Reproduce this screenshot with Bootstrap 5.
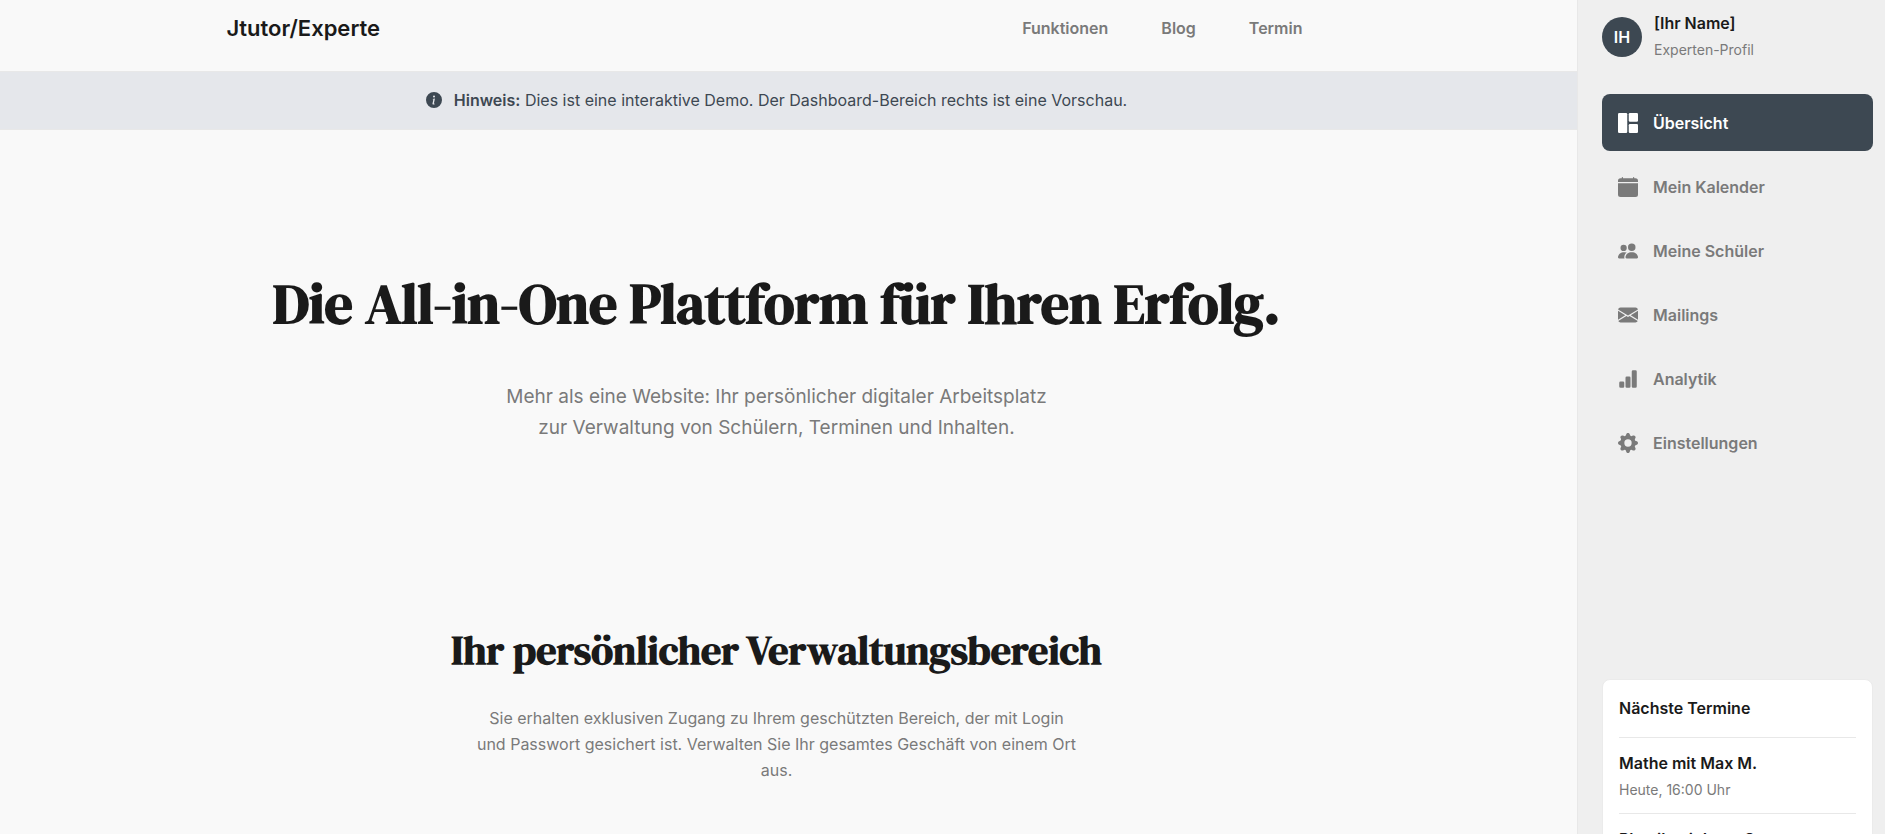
<!DOCTYPE html>
<html lang="de">
<head>
<meta charset="utf-8">
<meta name="viewport" content="width=device-width, initial-scale=1">
<title>Jtutor/Experte</title>
<link href="https://cdn.jsdelivr.net/npm/bootstrap@5.3.0/dist/css/bootstrap.min.css" rel="stylesheet">
<style>
:root { --ink: #1a1a1a; --muted: #7a7a7a; --slate: #3d4852; --line: #e8e8e8; }
body { font-family: Inter, "Liberation Sans", sans-serif; font-size: 16px; line-height: 26px; color: var(--ink); background: #f9f9f9; }
a { text-decoration: none; }
.page-main { min-width: 0; height: 100vh; overflow: hidden; }
.page-inner { max-width: 1100px; }
.gutter-end { padding-right: 24px; }
.topbar { height: 71px; padding-bottom: 16px; }
.brand { font-size: 22px; font-weight: 600; color: var(--ink); }
.topnav { gap: 53px; padding-right: 24px; }
.topnav a { font-weight: 600; color: var(--muted); }
.notice { background: #e5e7eb; color: var(--slate); border-top: 1px solid var(--line); border-bottom: 1px solid var(--line); padding-top: 15px; padding-bottom: 16px; }
.notice strong { font-weight: 600; }
h1, h2 { font-family: "DM Serif Display", "Liberation Serif", serif; font-weight: 700; color: var(--ink); margin: 0; }
h1 { font-size: 56px; line-height: 66px; }
h2 { font-size: 40px; line-height: 52px; }
.hero { padding-top: 141px; }
.hero p { font-size: 19px; line-height: 31px; color: var(--muted); max-width: 560px; margin: 44px auto 0; }
.intro { padding-top: 181px; }
.intro p { color: var(--muted); max-width: 600px; margin: 29px auto 0; }
.sidebar { width: 308px; height: 100vh; overflow: hidden; background: #efefef; border-left: 1px solid var(--line); padding: 10px 12px 0 24px; }
.avatar { width: 40px; height: 40px; background: var(--slate); color: #fff; font-weight: 600; }
.semi { font-weight: 600; }
.fine { font-size: 14px; line-height: 28px; color: var(--muted); }
.side-nav { gap: 7px; margin: 30px 0 208px; }
.side-nav a { height: 57px; padding: 0 16px; gap: 15px; border-radius: 8px; font-weight: 600; color: var(--muted); }
.side-nav a.active { background: var(--slate); color: #fff; }
.dates { background: #fff; border: 1px solid #ebebeb; border-radius: 8px; padding: 15px 16px; }
.dates li { border-top: 1px solid var(--line); padding: 12px 0 9px; }
</style>
</head>
<body>
<div class="d-flex">
  <div class="page-main flex-grow-1">
    <header class="gutter-end">
      <div class="topbar page-inner mx-auto d-flex align-items-center justify-content-between">
        <a class="brand" href="#">Jtutor/Experte</a>
        <nav class="topnav d-flex"><a href="#funktionen">Funktionen</a><a href="#blog">Blog</a><a href="#termin">Termin</a></nav>
      </div>
    </header>
    <div class="notice gutter-end d-flex align-items-center justify-content-center">
      <svg class="me-2" width="20" height="16" viewBox="0 0 20 16" fill="currentColor" aria-hidden="true"><path d="M8 16A8 8 0 1 0 8 0a8 8 0 0 0 0 16m.93-9.412-1 4.705c-.07.34.029.533.304.533.194 0 .487-.07.686-.246l-.088.416c-.287.346-.92.598-1.465.598-.703 0-1.002-.422-.808-1.319l.738-3.468c.064-.293.006-.399-.287-.47l-.451-.081.082-.381zM8 5.5a1 1 0 1 1 0-2 1 1 0 0 1 0 2"/></svg>
      <span><strong>Hinweis:</strong> Dies ist eine interaktive Demo. Der Dashboard-Bereich rechts ist eine Vorschau.</span>
    </div>
    <main class="gutter-end text-center">
      <section class="hero page-inner mx-auto">
        <h1>Die All-in-One Plattform für Ihren Erfolg.</h1>
        <p>Mehr als eine Website: Ihr persönlicher digitaler Arbeitsplatz zur Verwaltung von Schülern, Terminen und Inhalten.</p>
      </section>
      <section class="intro page-inner mx-auto" id="funktionen">
        <h2>Ihr persönlicher Verwaltungsbereich</h2>
        <p>Sie erhalten exklusiven Zugang zu Ihrem geschützten Bereich, der mit Login und Passwort gesichert ist. Verwalten Sie Ihr gesamtes Geschäft von einem Ort aus.</p>
      </section>
    </main>
  </div>
  <aside class="sidebar flex-shrink-0">
    <div class="d-flex align-items-center">
      <div class="avatar rounded-circle d-flex align-items-center justify-content-center flex-shrink-0">IH</div>
      <div class="ms-2 ps-1"><div class="semi">[Ihr Name]</div><div class="fine">Experten-Profil</div></div>
    </div>
    <nav class="side-nav d-flex flex-column">
      <a class="active d-flex align-items-center" href="#" aria-current="page"><svg width="20" height="20" viewBox="0 0 16 16" fill="currentColor"><rect width="7.4" height="16" rx="1"/><rect x="8.6" width="7.4" height="7" rx="1"/><rect x="8.6" y="8.8" width="7.4" height="7.2" rx="1"/></svg>Übersicht</a>
      <a class="d-flex align-items-center" href="#"><svg width="20" height="20" viewBox="0 0 16 16" fill="currentColor"><path d="M4 .5a.5.5 0 0 0-1 0V1H2a2 2 0 0 0-2 2v1h16V3a2 2 0 0 0-2-2h-1V.5a.5.5 0 0 0-1 0V1H4zM16 14V5H0v9a2 2 0 0 0 2 2h12a2 2 0 0 0 2-2"/></svg>Mein Kalender</a>
      <a class="d-flex align-items-center" href="#"><svg width="20" height="20" viewBox="0 0 16 16" fill="currentColor"><path d="M7 14s-1 0-1-1 1-4 5-4 5 3 5 4-1 1-1 1zm4-6a3 3 0 1 0 0-6 3 3 0 0 0 0 6m-5.784 6A2.24 2.24 0 0 1 5 13c0-1.355.68-2.75 1.936-3.72A6.3 6.3 0 0 0 5 9c-4 0-5 3-5 4s1 1 1 1zM4.500 8a2.500 2.500 0 1 0 0-5 2.500 2.500 0 0 0 0 5"/></svg>Meine Schüler</a>
      <a class="d-flex align-items-center" href="#"><svg width="20" height="20" viewBox="0 0 16 16" fill="currentColor"><path d="M.05 3.555A2 2 0 0 1 2 2h12a2 2 0 0 1 1.950 1.555L8 8.414zM0 4.697v7.104l5.803-3.558zM6.761 8.830l-6.570 4.027A2 2 0 0 0 2 14h12a2 2 0 0 0 1.808-1.144l-6.570-4.027L8 9.586zm3.436-.586L16 11.801V4.697z"/></svg>Mailings</a>
      <a class="d-flex align-items-center" href="#"><svg width="20" height="20" viewBox="0 0 16 16" fill="currentColor"><path d="M1 11a1 1 0 0 1 1-1h2a1 1 0 0 1 1 1v3a1 1 0 0 1-1 1H2a1 1 0 0 1-1-1zm5-4a1 1 0 0 1 1-1h2a1 1 0 0 1 1 1v7a1 1 0 0 1-1 1H7a1 1 0 0 1-1-1zm5-5a1 1 0 0 1 1-1h2a1 1 0 0 1 1 1v12a1 1 0 0 1-1 1h-2a1 1 0 0 1-1-1z"/></svg>Analytik</a>
      <a class="d-flex align-items-center" href="#"><svg width="20" height="20" viewBox="0 0 16 16" fill="currentColor"><path d="M9.405 1.050c-.413-1.400-2.397-1.400-2.810 0l-.100.340a1.464 1.464 0 0 1-2.105.872l-.310-.170c-1.283-.698-2.686.705-1.987 1.987l.169.311c.446.820.023 1.841-.872 2.105l-.340.100c-1.400.413-1.400 2.397 0 2.810l.340.100a1.464 1.464 0 0 1 .872 2.105l-.170.310c-.698 1.283.705 2.686 1.987 1.987l.311-.169a1.464 1.464 0 0 1 2.105.872l.100.340c.413 1.400 2.397 1.400 2.810 0l.100-.340a1.464 1.464 0 0 1 2.105-.872l.310.170c1.283.698 2.686-.705 1.987-1.987l-.169-.311a1.464 1.464 0 0 1 .872-2.105l.340-.100c1.400-.413 1.400-2.397 0-2.810l-.340-.100a1.464 1.464 0 0 1-.872-2.105l.170-.310c.698-1.283-.705-2.686-1.987-1.987l-.311.169a1.464 1.464 0 0 1-2.105-.872zM8 10.930a2.929 2.929 0 1 1 0-5.860 2.929 2.929 0 0 1 0 5.858z"/></svg>Einstellungen</a>
    </nav>
    <section class="dates">
      <div class="semi mb-3">Nächste Termine</div>
      <ul class="list-unstyled mb-0">
        <li><div class="semi">Mathe mit Max M.</div><div class="fine">Heute, 16:00 Uhr</div></li>
        <li><div class="semi">Physik mit Lena S.</div></li>
      </ul>
    </section>
  </aside>
</div>
<script src="https://cdn.jsdelivr.net/npm/bootstrap@5.3.0/dist/js/bootstrap.bundle.min.js"></script>
</body>
</html>
